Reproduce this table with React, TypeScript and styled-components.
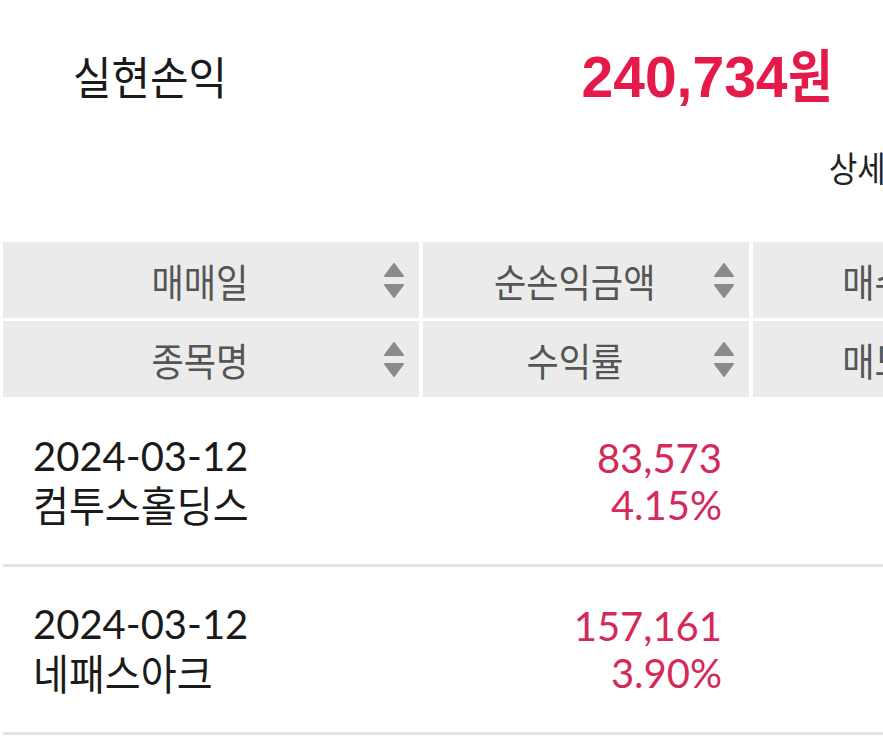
import styled, { createGlobalStyle } from "styled-components";

const KR = `"Noto Sans CJK KR", sans-serif`;
const LATIN = `Lato, "Noto Sans CJK KR", sans-serif`;
const COLUMNS = "416px 326px 330px";

const GlobalStyle = createGlobalStyle`
  html, body {
    margin: 0;
    padding: 0;
    background: #ffffff;
    overflow: hidden;
  }
  body {
    font-family: ${KR};
  }
`;

// hangul in the source is a narrow face, so squeeze it a bit
const Narrow = styled.span<{ $origin?: string; $scale?: number }>`
  display: inline-block;
  white-space: nowrap;
  transform: scaleX(${(p) => p.$scale ?? 0.85});
  transform-origin: ${(p) => p.$origin ?? "center"};
`;

const Page = styled.div`
  width: 1090px;
`;

const Summary = styled.section`
  display: flex;
  align-items: center;
  justify-content: space-between;
  width: 840px;
  height: 150px;
  padding-left: 73px;
  box-sizing: border-box;
`;

const SummaryLabel = styled(Narrow)`
  font-family: ${KR};
  font-size: 45px;
  font-weight: 400;
  line-height: 1;
  color: #1a1a1a;
`;

const Amount = styled.div`
  font-family: "Liberation Sans", Arial, sans-serif;
  font-weight: 700;
  font-size: 57px;
  line-height: 57px;
  color: #e6194b;
  white-space: nowrap;
`;

const Won = styled(Narrow)`
  font-family: ${KR};
  font-weight: 700;
`;

const DetailBar = styled.div`
  display: flex;
  justify-content: flex-end;
  width: 958px;
  height: 34px;
  margin-bottom: 58px;
`;

const DetailLink = styled(Narrow)`
  font-family: ${KR};
  font-size: 35px;
  line-height: 34px;
  color: #222222;
  cursor: pointer;
`;

const HeaderGrid = styled.div`
  display: grid;
  grid-template-columns: ${COLUMNS};
  column-gap: 4px;
  row-gap: 3px;
  padding-left: 3px;
`;

const HeadCell = styled.div`
  display: flex;
  align-items: center;
  height: 76px;
  padding: 0 14px;
  box-sizing: border-box;
  background: #ebebeb;
`;

const HeadLabel = styled.div`
  flex: 1;
  text-align: center;
  font-family: ${KR};
  font-size: 39px;
  line-height: 1;
  color: #555555;
`;

const Body = styled.div`
  padding-top: 2px;
`;

const BodyRow = styled.div`
  display: grid;
  grid-template-columns: ${COLUMNS};
  column-gap: 4px;
  align-items: center;
  margin-left: 3px;
  height: 165px;
  border-bottom: 3px solid #e3e3e3;
`;

const Cell = styled.div<{ $align?: "left" | "right" }>`
  text-align: ${(p) => p.$align ?? "left"};
  padding: ${(p) => (p.$align === "right" ? "0 27px 0 0" : "0 0 0 30px")};
  font-family: ${LATIN};
  font-size: 40px;
  color: ${(p) => (p.$align === "right" ? "#d42a5b" : "#1a1a1a")};
`;

const Line = styled.div`
  line-height: 47px;
  white-space: nowrap;
`;

const StockName = styled(Narrow)`
  font-family: ${KR};
  font-size: 42px;
`;

function SortIcon() {
  return (
    <svg width="22" height="38" viewBox="0 0 22 38" fill="#8a8a8a" stroke="#8a8a8a" strokeWidth="2" strokeLinejoin="round">
      <path d="M11 3 L20 15 L2 15 Z" />
      <path d="M2 24 L20 24 L11 36 Z" />
    </svg>
  );
}

const headers = ["매매일", "순손익금액", "매수금액", "종목명", "수익률", "매도금액"];

const trades = [
  { date: "2024-03-12", name: "컴투스홀딩스", profit: "83,573", rate: "4.15%" },
  { date: "2024-03-12", name: "네패스아크", profit: "157,161", rate: "3.90%" },
];

export default function App() {
  return (
    <Page>
      <GlobalStyle />
      <Summary>
        <SummaryLabel $origin="left center" $scale={0.93}>
          실현손익
        </SummaryLabel>
        <Amount>
          240,734<Won $origin="left center">원</Won>
        </Amount>
      </Summary>
      <DetailBar>
        <DetailLink $origin="left center" $scale={0.88}>
          상세보기
        </DetailLink>
      </DetailBar>

      <HeaderGrid>
        {headers.map((h) => (
          <HeadCell key={h}>
            <HeadLabel>
              <Narrow $scale={0.9}>{h}</Narrow>
            </HeadLabel>
            <SortIcon />
          </HeadCell>
        ))}
      </HeaderGrid>

      <Body>
        {trades.map((t, i) => (
          <BodyRow key={i}>
            <Cell>
              <Line>{t.date}</Line>
              <Line>
                <StockName $origin="left center" $scale={0.93}>
                  {t.name}
                </StockName>
              </Line>
            </Cell>
            <Cell $align="right">
              <Line>{t.profit}</Line>
              <Line>{t.rate}</Line>
            </Cell>
            <Cell $align="right" />
          </BodyRow>
        ))}
      </Body>
    </Page>
  );
}
